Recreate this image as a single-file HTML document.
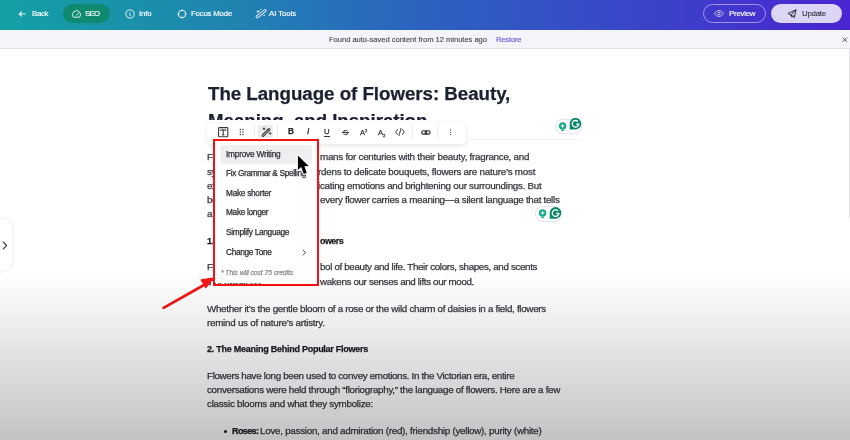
<!DOCTYPE html>
<html><head><meta charset="utf-8"><style>
html,body{margin:0;padding:0;}
body{width:850px;height:440px;overflow:hidden;position:relative;background:#fff;font-family:"Liberation Sans",sans-serif;}
#hdr{position:absolute;left:0;top:0;width:850px;height:30px;background:linear-gradient(90deg,#13a0a4 0%,#1f87b0 25%,#2c62c0 50%,#3a45c8 75%,#4a24d2 100%);}
.t{position:absolute;white-space:nowrap;-webkit-font-smoothing:antialiased;will-change:transform;-webkit-text-stroke:0.25px currentColor;}
.ic{position:absolute;overflow:visible;}
</style></head><body>

<div id="hdr"></div>
<svg class="ic" style="left:0;top:0" width="30" height="30" viewBox="0 0 30 30"><path d="M25.2 14H19.2M21.6 11.8L19.2 14l2.4 2.2" fill="none" stroke="#eef" stroke-width="1.05" stroke-linecap="round" stroke-linejoin="round"/></svg><div class="t" style="left:31.80px;top:9.22px;font-size:7.8px;line-height:9.36px;letter-spacing:-0.285px;font-weight:normal;font-style:normal;color:#ffffff;-webkit-text-stroke:0.15px currentColor">Back</div>
<div style="position:absolute;left:62.5px;top:4.3px;width:47.5px;height:18.7px;border-radius:9.5px;background:#0f8a71"></div><svg class="ic" style="left:0;top:0" width="110" height="30" viewBox="0 0 110 30"><path d="M73.4 17.2A4 4 0 1 1 79.6 17.2Z" fill="none" stroke="#e8f4f0" stroke-width="0.95" stroke-linejoin="round"/><path d="M76.5 15.2L78.2 13.2" stroke="#e8f4f0" stroke-width="0.95" stroke-linecap="round"/></svg><div class="t" style="left:85.00px;top:9.22px;font-size:7.8px;line-height:9.36px;letter-spacing:-0.657px;font-weight:normal;font-style:normal;color:#ffffff;-webkit-text-stroke:0.15px currentColor">SEO</div>
<svg class="ic" style="left:124.5px;top:8.8px" width="10" height="10" viewBox="0 0 10 10"><circle cx="5" cy="5" r="4.1" fill="none" stroke="#e6f2f6" stroke-width="0.95"/><path d="M5 4.6V6.8" stroke="#e6f2f6" stroke-width="0.9" stroke-linecap="round"/><circle cx="5" cy="3.2" r="0.5" fill="#e6f2f6"/></svg><div class="t" style="left:138.70px;top:9.22px;font-size:7.8px;line-height:9.36px;letter-spacing:-0.128px;font-weight:normal;font-style:normal;color:#ffffff;-webkit-text-stroke:0.15px currentColor">Info</div>
<svg class="ic" style="left:176.5px;top:8.8px" width="10" height="10" viewBox="0 0 10 10"><circle cx="5" cy="5" r="3.7" fill="none" stroke="#eaf6f8" stroke-width="1"/><path d="M5 0.8V1.9M5 8.1V9.2M0.8 5H1.9M8.1 5H9.2" stroke="#eaf6f8" stroke-width="1" stroke-linecap="round"/></svg><div class="t" style="left:190.50px;top:9.22px;font-size:7.8px;line-height:9.36px;letter-spacing:-0.182px;font-weight:normal;font-style:normal;color:#ffffff;-webkit-text-stroke:0.15px currentColor">Focus Mode</div>
<svg class="ic" style="left:0;top:0" width="300" height="30" viewBox="0 0 300 30"><path d="M257.2 16.8L265 10.6" stroke="#eef6fb" stroke-width="3.1" stroke-linecap="round"/><path d="M257.2 16.8L265 10.6" stroke="#2873ba" stroke-width="1.3" stroke-linecap="round"/><path d="M258.1 10.6v1.8M257.2 11.5h1.8" stroke="#eef6fb" stroke-width="0.9" stroke-linecap="round"/><circle cx="260.7" cy="9.6" r="0.6" fill="#eef6fb"/><circle cx="264.1" cy="15.3" r="0.75" fill="#eef6fb"/></svg><div class="t" style="left:268.80px;top:9.22px;font-size:7.8px;line-height:9.36px;letter-spacing:-0.063px;font-weight:normal;font-style:normal;color:#ffffff;-webkit-text-stroke:0.15px currentColor">AI Tools</div>
<div style="position:absolute;left:703.2px;top:3.8px;width:63px;height:19.7px;box-sizing:border-box;border:1px solid #9f93ee;border-radius:10px"></div><svg class="ic" style="left:714px;top:10px" width="10" height="7" viewBox="0 0 10 7"><path d="M0.6 3.5C2 1.2 3.4 0.6 5 0.6S8 1.2 9.4 3.5C8 5.8 6.6 6.4 5 6.4S2 5.8 0.6 3.5Z" fill="none" stroke="#d8d2fa" stroke-width="0.9"/><circle cx="5" cy="3.5" r="1.3" fill="none" stroke="#d8d2fa" stroke-width="0.9"/></svg><div class="t" style="left:728.60px;top:9.22px;font-size:7.8px;line-height:9.36px;letter-spacing:-0.206px;font-weight:normal;font-style:normal;color:#ffffff;-webkit-text-stroke:0.15px currentColor">Preview</div>
<div style="position:absolute;left:771.3px;top:3.8px;width:70.8px;height:19.7px;border-radius:10px;background:#dcd5f6"></div><svg class="ic" style="left:0;top:0" width="850" height="30" viewBox="0 0 850 30"><path d="M788.3 13.3L796 9.8L794.4 17.1Z M791.3 14.6L796 9.8 M791.3 14.6L791.9 17.1L793.1 15.5" fill="none" stroke="#26262e" stroke-width="0.95" stroke-linejoin="round" stroke-linecap="round"/></svg><div class="t" style="left:802.00px;top:9.22px;font-size:7.8px;line-height:9.36px;letter-spacing:-0.209px;font-weight:normal;font-style:normal;color:#2a2a33;-webkit-text-stroke:0.1px currentColor">Update</div>
<div style="position:absolute;left:0;top:30px;width:850px;height:18.8px;background:#f4f5fb;border-bottom:1px solid #e0e2ea;box-sizing:border-box"></div><div class="t" style="left:329.40px;top:34.81px;font-size:7.6px;line-height:9.12px;letter-spacing:-0.036px;font-weight:normal;font-style:normal;color:#44464e;-webkit-text-stroke:0.12px currentColor">Found auto-saved content from 12 minutes ago</div>
<div class="t" style="left:495.90px;top:34.81px;font-size:7.6px;line-height:9.12px;letter-spacing:-0.173px;font-weight:normal;font-style:normal;color:#6a52d4;-webkit-text-stroke:0.12px currentColor">Restore</div>
<svg class="ic" style="left:842.3px;top:36.6px" width="6" height="6" viewBox="0 0 6 6"><path d="M0.6 0.6L4.9 4.9M4.9 0.6L0.6 4.9" stroke="#4a4a50" stroke-width="0.95"/></svg><div style="position:absolute;left:848.6px;top:49px;width:1px;height:169px;background:#e0e1e5"></div><div style="position:absolute;left:-10px;top:218.8px;width:21.8px;height:52.5px;border-radius:10px;background:#fff;box-shadow:0 0 5px rgba(50,60,120,0.12)"></div><svg class="ic" style="left:1.9px;top:241px" width="6" height="9" viewBox="0 0 6 9"><path d="M1.2 1L4.6 4.5 1.2 8" fill="none" stroke="#444" stroke-width="1.1" stroke-linecap="round" stroke-linejoin="round"/></svg><div class="t" style="left:207.50px;top:82.50px;font-size:18.7px;line-height:22.44px;letter-spacing:-0.017px;font-weight:bold;font-style:normal;color:#1b2130;">The Language of Flowers: Beauty,</div>
<div class="t" style="left:207.50px;top:109.70px;font-size:18.7px;line-height:22.44px;letter-spacing:-0.031px;font-weight:bold;font-style:normal;color:#1b2130;">Meaning, and Inspiration</div>
<div class="t" style="left:207.00px;top:151.22px;font-size:9.8px;line-height:11.76px;letter-spacing:-0.370px;font-weight:normal;font-style:normal;color:#34363d;">Flowers have</div>
<div class="t" style="left:207.00px;top:165.52px;font-size:9.8px;line-height:11.76px;letter-spacing:-0.370px;font-weight:normal;font-style:normal;color:#34363d;">symbolism. From</div>
<div class="t" style="left:207.00px;top:179.82px;font-size:9.8px;line-height:11.76px;letter-spacing:-0.370px;font-weight:normal;font-style:normal;color:#34363d;">expressive art</div>
<div class="t" style="left:207.00px;top:194.12px;font-size:9.8px;line-height:11.76px;letter-spacing:-0.370px;font-weight:normal;font-style:normal;color:#34363d;">beyond their</div>
<div class="t" style="left:207.00px;top:208.42px;font-size:9.8px;line-height:11.76px;letter-spacing:-0.370px;font-weight:normal;font-style:normal;color:#34363d;">a story.</div>
<div class="t" style="left:319.80px;top:151.22px;font-size:9.8px;line-height:11.76px;letter-spacing:-0.258px;font-weight:normal;font-style:normal;color:#34363d;">mans for centuries with their beauty, fragrance, and</div>
<div class="t" style="left:318.40px;top:165.52px;font-size:9.8px;line-height:11.76px;letter-spacing:-0.236px;font-weight:normal;font-style:normal;color:#34363d;">rdens to delicate bouquets, flowers are nature’s most</div>
<div class="t" style="left:318.20px;top:179.82px;font-size:9.8px;line-height:11.76px;letter-spacing:-0.258px;font-weight:normal;font-style:normal;color:#34363d;">icating emotions and brightening our surroundings. But</div>
<div class="t" style="left:319.60px;top:194.12px;font-size:9.8px;line-height:11.76px;letter-spacing:-0.288px;font-weight:normal;font-style:normal;color:#34363d;">every flower carries a meaning—a silent language that tells</div>
<div class="t" style="left:207.00px;top:235.68px;font-size:9.0px;line-height:10.80px;letter-spacing:-0.250px;font-weight:bold;font-style:normal;color:#1b1b22;">1. The Beauty</div>
<div class="t" style="left:319.80px;top:235.68px;font-size:9.0px;line-height:10.80px;letter-spacing:-0.562px;font-weight:bold;font-style:normal;color:#1b1b22;">owers</div>
<div class="t" style="left:207.00px;top:261.12px;font-size:9.8px;line-height:11.76px;letter-spacing:-0.370px;font-weight:normal;font-style:normal;color:#34363d;">Flowers have</div>
<div class="t" style="left:319.80px;top:261.12px;font-size:9.8px;line-height:11.76px;letter-spacing:-0.350px;font-weight:normal;font-style:normal;color:#34363d;">bol of beauty and life. Their colors, shapes, and scents</div>
<div class="t" style="left:207.00px;top:275.62px;font-size:9.8px;line-height:11.76px;letter-spacing:-0.370px;font-weight:normal;font-style:normal;color:#34363d;">that awakens</div>
<div class="t" style="left:319.80px;top:275.62px;font-size:9.8px;line-height:11.76px;letter-spacing:-0.358px;font-weight:normal;font-style:normal;color:#34363d;">wakens our senses and lifts our mood.</div>
<div class="t" style="left:207.30px;top:302.92px;font-size:9.8px;line-height:11.76px;letter-spacing:-0.293px;font-weight:normal;font-style:normal;color:#34363d;">Whether it’s the gentle bloom of a rose or the wild charm of daisies in a field, flowers</div>
<div class="t" style="left:207.30px;top:317.12px;font-size:9.8px;line-height:11.76px;letter-spacing:-0.250px;font-weight:normal;font-style:normal;color:#34363d;">remind us of nature’s artistry.</div>
<div class="t" style="left:207.20px;top:343.88px;font-size:9.0px;line-height:10.80px;letter-spacing:-0.255px;font-weight:bold;font-style:normal;color:#1b1b22;">2. The Meaning Behind Popular Flowers</div>
<div class="t" style="left:207.30px;top:369.72px;font-size:9.8px;line-height:11.76px;letter-spacing:-0.333px;font-weight:normal;font-style:normal;color:#34363d;">Flowers have long been used to convey emotions. In the Victorian era, entire</div>
<div class="t" style="left:207.30px;top:384.02px;font-size:9.8px;line-height:11.76px;letter-spacing:-0.284px;font-weight:normal;font-style:normal;color:#34363d;">conversations were held through “floriography,” the language of flowers. Here are a few</div>
<div class="t" style="left:207.30px;top:398.12px;font-size:9.8px;line-height:11.76px;letter-spacing:-0.269px;font-weight:normal;font-style:normal;color:#34363d;">classic blooms and what they symbolize:</div>
<div style="position:absolute;left:223.6px;top:429.8px;width:3.1px;height:3.1px;border-radius:50%;background:#1b1b22"></div><div class="t" style="left:231.80px;top:425.68px;font-size:9.0px;line-height:10.80px;letter-spacing:-0.602px;font-weight:bold;font-style:normal;color:#1b1b22;">Roses:</div>
<div class="t" style="left:260.40px;top:424.92px;font-size:9.8px;line-height:11.76px;letter-spacing:-0.257px;font-weight:normal;font-style:normal;color:#34363d;">Love, passion, and admiration (red), friendship (yellow), purity (white)</div>
<div style="position:absolute;left:554.8px;top:118.7px;width:27.5px;height:15.3px;box-sizing:border-box;border:1px solid #e4e5e9;border-radius:7.6px;background:#fff;box-shadow:0 0 1.5px rgba(0,0,0,0.06)"></div><svg class="ic" style="left:554.8px;top:118.7px" width="30" height="16" viewBox="0 0 30 16"><circle cx="7.6" cy="6.9" r="3.7" fill="#17a98b"/><path d="M6.3 10.6h2.6v1.4H6.3z" fill="#17a98b"/><path d="M7.6 4.6l0.7 1.6 1.6 0.7-1.6 0.7-0.7 1.6-0.7-1.6-1.6-0.7 1.6-0.7z" fill="#fff"/><g transform="translate(20.5 4.6)"><path d="M0 -5.8A5.8 5.8 0 1 1 0 5.8H-5.8V0A5.8 5.8 0 0 1 0 -5.8Z" fill="#0d876b"/><path d="M2.4 -2.1A3.3 3.3 0 1 0 3.3 0.5H0.6" fill="none" stroke="#fff" stroke-width="1.3"/></g></svg><div style="position:absolute;left:534.5px;top:206.3px;width:27.5px;height:15.3px;box-sizing:border-box;border:1px solid #e4e5e9;border-radius:7.6px;background:#fff;box-shadow:0 0 1.5px rgba(0,0,0,0.06)"></div><svg class="ic" style="left:534.5px;top:206.3px" width="30" height="16" viewBox="0 0 30 16"><circle cx="7.6" cy="6.9" r="3.7" fill="#17a98b"/><path d="M6.3 10.6h2.6v1.4H6.3z" fill="#17a98b"/><path d="M7.6 4.6l0.7 1.6 1.6 0.7-1.6 0.7-0.7 1.6-0.7-1.6-1.6-0.7 1.6-0.7z" fill="#fff"/><g transform="translate(20.5 6.9)"><path d="M0 -5.8A5.8 5.8 0 1 1 0 5.8H-5.8V0A5.8 5.8 0 0 1 0 -5.8Z" fill="#0d876b"/><path d="M2.4 -2.1A3.3 3.3 0 1 0 3.3 0.5H0.6" fill="none" stroke="#fff" stroke-width="1.3"/></g></svg><div style="position:absolute;left:440px;top:138.6px;width:143px;height:1px;background:#f3f3f5"></div><div style="position:absolute;left:203px;top:119.8px;width:266px;height:5px;background:#fff"></div><div style="position:absolute;left:206.6px;top:123px;width:259px;height:20.7px;border-radius:4px;background:#fff;box-shadow:0 1.5px 4px rgba(0,0,0,0.09),0 0 1px rgba(0,0,0,0.06)"></div><svg class="ic" style="left:217.6px;top:126.6px" width="11" height="11" viewBox="0 0 11 11"><rect x="0.6" y="0.6" width="9.2" height="9.2" rx="0.8" fill="none" stroke="#3a3a3a" stroke-width="1.1"/><path d="M2.8 2.9h4.8M5.2 2.9v5M4 7.9h2.4M2.8 2.9v1.1M7.6 2.9v1.1" fill="none" stroke="#2a2a2a" stroke-width="1"/></svg><svg class="ic" style="left:239px;top:128.2px" width="6" height="8" viewBox="0 0 6 8"><g fill="#3a3a3a"><circle cx="1.4" cy="1.5" r="0.75"/><circle cx="4.0" cy="1.5" r="0.75"/><circle cx="1.4" cy="4" r="0.75"/><circle cx="4.0" cy="4" r="0.75"/><circle cx="1.4" cy="6.5" r="0.75"/><circle cx="4.0" cy="6.5" r="0.75"/></g></svg><div style="position:absolute;left:254px;top:124.5px;width:1px;height:13px;background:#ececee"></div><div style="position:absolute;left:258.4px;top:125px;width:15px;height:12.6px;border-radius:2px;background:#ebebed"></div><svg class="ic" style="left:260.5px;top:126.5px" width="11" height="10" viewBox="0 0 11 10"><path d="M2 8.6L8 2.6" stroke="#2a2a2a" stroke-width="2.8" stroke-linecap="round"/><path d="M2 8.6L8 2.6" stroke="#ebebed" stroke-width="1.0" stroke-linecap="round"/><path d="M6.8 3.8L7.2 3.4" stroke="#2a2a2a" stroke-width="1.2"/><path d="M3 0.8v1.8M2.1 1.7h1.8M9.2 5.6v1.6M8.4 6.4h1.6" stroke="#2a2a2a" stroke-width="0.9" stroke-linecap="round"/></svg><div style="position:absolute;left:277.2px;top:124.5px;width:1px;height:13px;background:#ececee"></div><div class="t" style="left:287.60px;top:127.14px;font-size:8.2px;line-height:9.84px;letter-spacing:0.000px;font-weight:bold;font-style:normal;color:#222;">B</div>
<div class="t" style="left:307.40px;top:127.14px;font-size:8.2px;line-height:9.84px;letter-spacing:0.000px;font-weight:normal;font-style:italic;color:#222;">I</div>
<div class="t" style="left:324.00px;top:127.32px;font-size:7.8px;line-height:9.36px;letter-spacing:0.000px;font-weight:normal;font-style:normal;color:#333;">U</div>
<div style="position:absolute;left:324.2px;top:135.6px;width:5.4px;height:0.9px;background:#333"></div><div class="t" style="left:342.60px;top:127.71px;font-size:7.6px;line-height:9.12px;letter-spacing:0.000px;font-weight:normal;font-style:normal;color:#333;">S</div>
<div style="position:absolute;left:341.8px;top:131.6px;width:7.5px;height:0.9px;background:#333"></div><div class="t" style="left:360.00px;top:127.71px;font-size:7.6px;line-height:9.12px;letter-spacing:0.000px;font-weight:normal;font-style:normal;color:#333;">A</div>
<div class="t" style="left:365.20px;top:127.62px;font-size:4.2px;line-height:5.04px;letter-spacing:0.000px;font-weight:normal;font-style:normal;color:#333;">2</div>
<div class="t" style="left:377.60px;top:127.71px;font-size:7.6px;line-height:9.12px;letter-spacing:0.000px;font-weight:normal;font-style:normal;color:#333;">A</div>
<div class="t" style="left:383.00px;top:133.42px;font-size:4.2px;line-height:5.04px;letter-spacing:0.000px;font-weight:normal;font-style:normal;color:#333;">2</div>
<svg class="ic" style="left:395px;top:128px" width="10" height="8" viewBox="0 0 10 8"><path d="M2.6 1.4L0.6 4l2 2.6M7.4 1.4L9.4 4l-2 2.6M5.9 0.4L4.1 7.6" fill="none" stroke="#333" stroke-width="0.9" stroke-linecap="round" stroke-linejoin="round"/></svg><div style="position:absolute;left:412.2px;top:124.5px;width:1px;height:14px;background:#ececee"></div><svg class="ic" style="left:420.5px;top:129.8px" width="10" height="5" viewBox="0 0 10 5"><rect x="0.7" y="0.7" width="5" height="3.4" rx="1.7" fill="none" stroke="#2a2a2a" stroke-width="1.15"/><rect x="4.1" y="0.7" width="5" height="3.4" rx="1.7" fill="none" stroke="#2a2a2a" stroke-width="1.15"/></svg><div style="position:absolute;left:437.3px;top:124.5px;width:1px;height:14px;background:#ececee"></div><svg class="ic" style="left:448.5px;top:128.8px" width="3" height="7" viewBox="0 0 3 7"><g fill="#444"><circle cx="1.5" cy="1.0" r="0.65"/><circle cx="1.5" cy="3.3" r="0.65"/><circle cx="1.5" cy="5.6" r="0.65"/></g></svg><div style="position:absolute;left:213px;top:139.5px;width:106px;height:143.6px;background:#fff"></div><div style="position:absolute;left:219.5px;top:145.3px;width:92px;height:18.7px;border-radius:3px;background:#efeff1"></div><div class="t" style="left:225.90px;top:149.74px;font-size:8.3px;line-height:9.96px;letter-spacing:-0.231px;font-weight:normal;font-style:normal;color:#2c2d33;">Improve Writing</div>
<div class="t" style="left:225.90px;top:168.94px;font-size:8.3px;line-height:9.96px;letter-spacing:-0.363px;font-weight:normal;font-style:normal;color:#2c2d33;">Fix Grammar &amp; Spelling</div>
<div class="t" style="left:225.90px;top:188.54px;font-size:8.3px;line-height:9.96px;letter-spacing:-0.286px;font-weight:normal;font-style:normal;color:#2c2d33;">Make shorter</div>
<div class="t" style="left:225.90px;top:208.04px;font-size:8.3px;line-height:9.96px;letter-spacing:-0.316px;font-weight:normal;font-style:normal;color:#2c2d33;">Make longer</div>
<div class="t" style="left:225.90px;top:227.94px;font-size:8.3px;line-height:9.96px;letter-spacing:-0.299px;font-weight:normal;font-style:normal;color:#2c2d33;">Simplify Language</div>
<div class="t" style="left:225.90px;top:247.64px;font-size:8.3px;line-height:9.96px;letter-spacing:-0.339px;font-weight:normal;font-style:normal;color:#2c2d33;">Change Tone</div>
<svg class="ic" style="left:301.5px;top:249.2px" width="5" height="7" viewBox="0 0 5 7"><path d="M1.1 1.1L3.6 3.6 1.1 6.1" fill="none" stroke="#333" stroke-width="0.9" stroke-linecap="round" stroke-linejoin="round"/></svg><div class="t" style="left:221.40px;top:268.86px;font-size:6.8px;line-height:8.16px;letter-spacing:-0.087px;font-weight:normal;font-style:italic;color:#8b8c94;">* This will cost 75 credits</div>
<div style="position:absolute;left:213px;top:139.3px;width:105.5px;height:147.2px;box-sizing:border-box;border:2.5px solid #f51212"></div><svg class="ic" style="left:0;top:0" width="850" height="440" viewBox="0 0 850 440"><path d="M163.6 307.9L204 285" stroke="#f51414" stroke-width="2.7" stroke-linecap="round"/><path d="M213.2 278.1L201.2 279.9L205.9 287.7Z" fill="#f51414" stroke="#f51414" stroke-width="1.2" stroke-linejoin="round"/></svg><svg class="ic" style="left:0;top:0" width="850" height="440" viewBox="0 0 850 440"><g transform="translate(297.9 155.6)"><path d="M0 0L0 14.3L3.3 11.4L5.9 18.3L8.8 17.2L6.5 10.6L10.8 10.4Z" fill="#fff" stroke="#fff" stroke-width="2.2" stroke-linejoin="round" opacity="0.95"/><path d="M0 0L0 14.3L3.3 11.4L5.9 18.3L8.8 17.2L6.5 10.6L10.8 10.4Z" fill="#050505"/></g></svg><div style="position:absolute;left:0;top:276px;width:850px;height:164px;background:linear-gradient(to bottom,rgba(0,0,0,0) 0%,rgba(0,0,0,0.235) 100%)"></div>
</body></html>
